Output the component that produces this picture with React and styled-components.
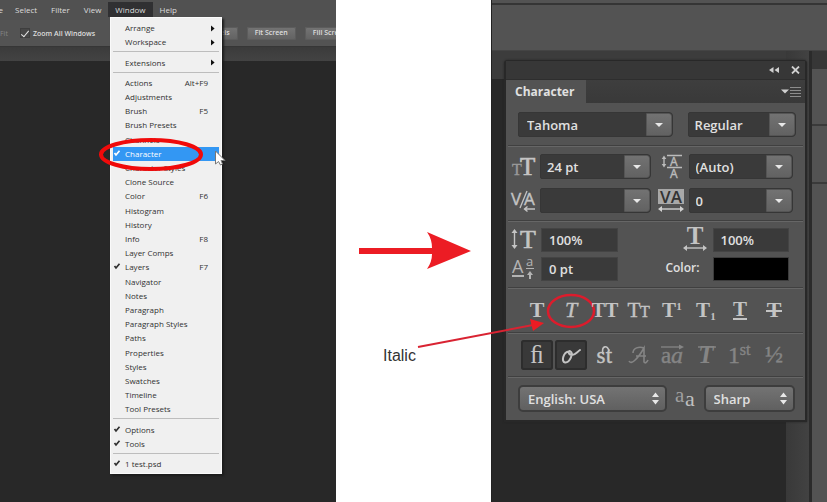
import React from "react";
import styled, { createGlobalStyle, css } from "styled-components";

const GlobalStyle = createGlobalStyle`
  *, *::before, *::after { box-sizing: border-box; }
  body { margin: 0; background: #fff; }
  button, input, select { font: inherit; color: inherit; margin: 0; padding: 0; border: 0; background: none; }
`;

const uiFont = `"Open Sans", "Noto Sans", sans-serif`;
const red = "#ec1c24";

const Page = styled.main`
  display: grid;
  grid-template-columns: 336fr 155fr 336fr;
  min-height: 100vh;
  overflow: hidden;
  font-family: ${uiFont};
`;

/* ---------- Left: application with the open menu ---------- */

const AppWindow = styled.section`
  position: relative;
  min-width: 0;
  background: #282828;
  overflow: hidden;
`;

const MenuBar = styled.nav`
  display: flex;
  height: 20px;
  padding-top: 2px;
  background: #515151;
  font-size: 8px;
  line-height: 15px;
  color: #dcdcdc;
`;

const MenuTitle = styled.button`
  flex: none;
  height: 15px;
  padding: 0 7px;
  line-height: 15px;
  background: ${(p) => (p.$open ? "#303032" : "transparent")};
`;

const ClippedTitle = styled(MenuTitle)`
  width: 8px;
  padding: 0;
  display: flex;
  justify-content: flex-end;
  overflow: hidden;
  padding-right: 5px;
`;

const OptionsBar = styled.div`
  display: flex;
  align-items: center;
  height: 26px;
  background: #535353;
  font-size: 7px;
  font-weight: 600;
  color: #dedede;
  white-space: nowrap;
`;

const FadedOption = styled.span`
  width: 20px;
  flex: none;
  color: #858585;
  font-weight: 400;
`;

const CheckOption = styled.label`
  display: flex;
  align-items: center;
  gap: 3px;
  flex: 1;
`;

const Tick = styled.input`
  appearance: none;
  width: 10px;
  height: 10px;
  background: #474747;
  border: 1px solid #3e3e3e;
  display: grid;
  place-items: center;
  &:checked::after {
    content: "";
    width: 4px;
    height: 8px;
    border: solid #e6e6e6;
    border-width: 0 1px 1px 0;
    transform: rotate(40deg);
  }
`;

const ViewButtons = styled.div`
  display: flex;
  flex: none;
  gap: 9px;
  width: 157px;
  overflow: hidden;
`;

const ViewButton = styled.button`
  flex: none;
  height: 13px;
  padding: 0 8px;
  border-radius: 2px;
  line-height: 12px;
  background: linear-gradient(#747474, #626262);
  box-shadow: inset 0 0 0 1px #5c5c5c;
`;

const DocTabs = styled.div`
  height: 15px;
  background: linear-gradient(#3b3b3b, #434343);
  border-top: 1px solid #363636;
`;

const Dropdown = styled.div`
  position: absolute;
  left: 110px;
  top: 17px;
  width: 112px;
  height: 457px;
  padding: 3px 2px 2px;
  display: flex;
  flex-direction: column;
  background: #f0f0f0;
  border: 1px solid #fafafa;
  box-shadow: 2px 2px 2px #1c1c1c;
  font-size: 8px;
  color: #303030;
`;

const Item = styled.button`
  flex: 1;
  min-height: 0;
  display: grid;
  grid-template-columns: 12px 1fr auto;
  align-items: center;
  padding-right: 11px;
  line-height: 14px;
  text-align: left;
  white-space: nowrap;
  ${(p) =>
    p.$active &&
    css`
      background: #3397f3;
      color: #fff;
    `}
  ${(p) =>
    p.$sub &&
    css`
      padding-right: 4px;
    `}
`;

const MenuRule = styled.hr`
  width: 100%;
  height: 1px;
  margin: 2px 0 3px;
  border: 0;
  background: #bdbdbd;
`;

const MenuRing = styled.svg`
  position: absolute;
  left: 98px;
  top: 136px;
`;

const Pointer = styled.svg`
  position: absolute;
  left: 214px;
  top: 150px;
`;

/* ---------- Middle: arrow and caption ---------- */

const Bridge = styled.section`
  position: relative;
  z-index: 2;
  padding-top: 231px;
`;

const BigArrow = styled.svg`
  display: block;
  margin-left: 23px;
`;

const Caption = styled.p`
  margin: 77px 0 0 47px;
  font: 16px/18px "Liberation Sans", Arial, sans-serif;
  color: #333;
`;

const CaptionLine = styled.svg`
  position: absolute;
  left: 81px;
  top: 316px;
`;

/* ---------- Right: workspace and Character panel ---------- */

const Workspace = styled.section`
  position: relative;
  min-width: 0;
  display: grid;
  grid-template-rows: 51px 1fr;
  background: #282828;
  border-left: 1px solid #222;
`;

const TopBar = styled.div`
  background: linear-gradient(#535353 3px, #353535 3px, #353535 5px, #535353 5px);
  border-bottom: 1px solid #444;
`;

const Docks = styled.div`
  display: grid;
  grid-template-columns: 1fr 26px 15px;
`;

const Canvas = styled.div`
  background: linear-gradient(#3c3c3c 28px, #282828 28px);
`;

const Scroller = styled.div`
  background: linear-gradient(90deg, #393939, #424242);
  border-right: 3px solid #2b2b2b;
`;

const Rail = styled.div`
  display: flex;
  flex-direction: column;
  background: #535353;
  border-top: 18px solid #373737;
`;

const RailCell = styled.div`
  height: ${(p) => p.$h}px;
  border-bottom: 2px solid #3a3a3a;
`;

const Panel = styled.section`
  position: absolute;
  left: 12px;
  right: 20px;
  top: 60px;
  border: 2px solid #282828;
  border-top-width: 1px;
  border-radius: 4px 4px 0 0;
  background: #535353;
  color: #e0e0e0;
  font-size: 13px;
  font-weight: 600;
  box-shadow: 0 0 2px #222;
`;

const PanelTop = styled.header`
  display: flex;
  justify-content: flex-end;
  align-items: center;
  gap: 11px;
  height: 18px;
  padding-right: 5px;
  background: #373737;
`;

const IconButton = styled.button`
  display: flex;
  color: #d0d0d0;
`;

const TabStrip = styled.div`
  display: flex;
  justify-content: space-between;
  align-items: center;
  height: 24px;
  padding-right: 4px;
  background: linear-gradient(#3e3e3e, #393939);
  border-top: 1px solid #2e2e2e;
`;

const Tab = styled.h2`
  align-self: stretch;
  margin: 0;
  padding: 0 12px 0 9px;
  font-size: 12px;
  line-height: 23px;
  font-weight: 700;
  background: #535353;
`;

const Rule = styled.hr`
  height: 2px;
  margin: 0 2px;
  border: 0;
  background: linear-gradient(#404040 1px, #666 1px);
`;

const FontRow = styled.div`
  display: grid;
  grid-template-columns: 154fr 108fr;
  column-gap: 15px;
  padding: 9px 9px 8px 12px;
`;

const MetricGrid = styled.div`
  display: grid;
  grid-template-columns: 28px 110fr 38px 104fr;
  row-gap: 9px;
  padding: 7px 12px 7px 6px;
`;

const ScaleGrid = styled.div`
  display: grid;
  grid-template-columns: 29px 76fr 95px 76fr;
  gap: 5px 0;
  padding: 6px 16px 6px 6px;
`;

const IconCell = styled.label`
  display: flex;
  align-items: center;
  justify-content: ${(p) => (p.$end ? "flex-end" : "flex-start")};
  padding-right: ${(p) => (p.$end ? 4 : 0)}px;
`;

const ColorLabel = styled.label`
  justify-self: end;
  padding-right: 13px;
  font-size: 12px;
  line-height: 22px;
`;

const Combo = styled.div`
  display: grid;
  grid-template-columns: 1fr 26px;
  height: 25px;
  background: #3a3a3a;
  border: 1px solid #363636;
  border-radius: 2px 4px 4px 2px;
  overflow: hidden;
`;

const ComboSelect = styled.select`
  appearance: none;
  min-width: 0;
  padding-left: ${(p) => (p.$wide ? 8 : 6)}px;
  outline: 0;
`;

const ComboArrow = styled.span`
  display: grid;
  place-items: center;
  background: linear-gradient(#727272, #626262);
  border: 1px solid #555;
  border-radius: 0 3px 3px 0;
`;

const Field = styled.input`
  min-width: 0;
  width: 100%;
  height: 24px;
  padding-left: 7px;
  background: #3a3a3a;
  border: 1px solid #444;
  outline: 0;
`;

const Swatch = styled.button`
  height: 24px;
  background: #000;
  border: 1px solid #3c3c3c;
`;

const StyleRow = styled.div`
  display: grid;
  grid-template-columns: repeat(8, 1fr);
  align-items: center;
  height: ${(p) => p.$h}px;
  padding: 0 14px 0 14px;
`;

const StyleButton = styled.button`
  position: relative;
  display: grid;
  place-items: center;
  height: 30px;
  margin: 0 1px;
  border-radius: 3px;
  color: ${(p) => (p.$dim ? "#858585" : "#c4c4c4")};
  ${(p) =>
    p.$on &&
    css`
      background: #393939;
      box-shadow: inset 0 0 0 2px #2d2d2d;
    `}
`;

const ItalicRing = styled.svg`
  position: absolute;
  left: 50%;
  top: 50%;
  transform: translate(-50%, -50%);
`;

const Footer = styled.div`
  display: grid;
  grid-template-columns: 148fr 37px 91fr;
  align-items: center;
  padding: 7px 10px 8px 12px;
`;

const Popup = styled.div`
  display: flex;
  align-items: center;
  height: 27px;
  padding-right: 5px;
  background: linear-gradient(#737373, #606060);
  border: 2px solid #3d3d3d;
  border-radius: 5px;
`;

const PopupSelect = styled.select`
  appearance: none;
  flex: 1;
  min-width: 0;
  padding-left: 8px;
  outline: 0;
`;

const AntiAlias = styled.span`
  display: grid;
  place-items: center;
`;

/* ---------- Drawings ---------- */

const serif = `"Liberation Serif", "Times New Roman", serif`;
const sans = `"Open Sans", sans-serif`;

const Glyph = ({ w = 30, h = 30, children, family = serif }) => (
  <svg
    width={w}
    height={h}
    viewBox={`0 0 ${w} ${h}`}
    fill="currentColor"
    fontFamily={family}
    fontWeight="400"
    overflow="visible"
    aria-hidden="true"
  >
    {children}
  </svg>
);

const Check = () => (
  <svg width="8" height="8" viewBox="0 0 8 8" aria-hidden="true">
    <path d="M1.5 4 L3 6 L6.5 1.8" fill="none" stroke="currentColor" strokeWidth="1.7" />
  </svg>
);

const SubArrow = () => (
  <svg width="5" height="7" viewBox="0 0 5 7" aria-hidden="true">
    <path d="M1 0.5 L4.6 3.5 L1 6.5Z" fill="#111" />
  </svg>
);

const DownArrow = () => (
  <svg width="10" height="6" viewBox="0 0 10 6" aria-hidden="true">
    <path d="M1 1 H9 L5 5Z" fill="#e8e8e8" />
  </svg>
);

const UpDown = () => (
  <svg width="9" height="13" viewBox="0 0 9 13" aria-hidden="true">
    <path d="M4.5 0.5 L8 5 H1Z M4.5 12.5 L8 8 H1Z" fill="#e8e8e8" />
  </svg>
);

const SizeIcon = () => (
  <Glyph w={24} h={24}>
    <text x="0" y="20" fontSize="16" fill="#999" stroke="#999" strokeWidth="0.4">T</text>
    <text x="8" y="20" fontSize="25" fill="#c4c4c4" stroke="#c4c4c4" strokeWidth="0.7">T</text>
  </Glyph>
);

const KernIcon = () => (
  <Glyph w={26} h={24} family={sans}>
    <g fill="#c4c4c4" stroke="#c4c4c4">
      <text x="-1" y="16" fontSize="17" strokeWidth="0.4">V</text>
      <path d="M8 19 L15 2" strokeWidth="1.3" />
      <text x="12" y="16" fontSize="17" strokeWidth="0.4">A</text>
      <path d="M12 20 H23 M15.5 17.5 L12.5 20 L15.5 22.5" fill="none" strokeWidth="1.4" />
    </g>
  </Glyph>
);

const LeadingIcon = () => (
  <Glyph w={24} h={25} family={sans}>
    <g fill="#bbb" stroke="#bbb">
      <path d="M6 1.5 H21 M6 13.5 H21" strokeWidth="1.4" />
      <text x="9" y="11.5" fontSize="12" strokeWidth="0.4">A</text>
      <text x="9" y="24" fontSize="12" strokeWidth="0.4">A</text>
      <path d="M3 4 V11" strokeWidth="1.4" />
      <path d="M3 1.5 L5.3 5 H0.7Z M3 13.5 L5.3 10 H0.7Z" stroke="none" />
    </g>
  </Glyph>
);

const TrackIcon = () => (
  <Glyph w={27} h={25} family={sans}>
    <rect x="0" y="1" width="26" height="15" fill="#a8a8a8" />
    <text x="13" y="15" fontSize="17" fontWeight="600" fill="#333" textAnchor="middle">VA</text>
    <path d="M2 21 H24" stroke="#d0d0d0" strokeWidth="1.4" />
    <path d="M0 21 L4 18 V24Z M26 21 L22 18 V24Z" fill="#d0d0d0" />
  </Glyph>
);

const VScaleIcon = () => (
  <Glyph w={24} h={24}>
    <g fill="#c4c4c4">
      <path d="M2.5 3 V19" stroke="#c4c4c4" strokeWidth="1.4" />
      <path d="M2.5 1 L5.5 5 H-0.5Z M2.5 21 L5.5 17 H-0.5Z" />
      <text x="8" y="20" fontSize="26" stroke="#c4c4c4" strokeWidth="0.6">T</text>
    </g>
  </Glyph>
);

const HScaleIcon = () => (
  <Glyph w={26} h={24}>
    <g fill="#c4c4c4">
      <text x="12" y="16" fontSize="25" fontWeight="700" textAnchor="middle">T</text>
      <path d="M3 20 H22" stroke="#c4c4c4" strokeWidth="1.4" />
      <path d="M0 20 L4 17 V23Z M24 20 L20 17 V23Z" />
    </g>
  </Glyph>
);

const BaselineIcon = () => (
  <Glyph w={24} h={24} family={sans}>
    <g fill="#b4b4b4">
      <text x="0" y="16" fontSize="18">A</text>
      <rect x="0" y="18" width="12" height="2" />
      <text x="14" y="9" fontSize="13">a</text>
      <rect x="14" y="11" width="8" height="1" />
      <path d="M18 22 V18" stroke="#b4b4b4" strokeWidth="2" />
      <path d="M18 14 L21 18 H15Z" />
    </g>
  </Glyph>
);

const T = (props) => (
  <text x="15" y="21" fontSize="20" fontWeight="700" textAnchor="middle" {...props}>
    {props.children || "T"}
  </text>
);

const thin = { fontWeight: "400", stroke: "currentColor", strokeWidth: "0.4" };

const typeStyles = [
  { label: "Faux Bold", art: <T fontSize="22" /> },
  { label: "Faux Italic", art: <T {...thin} fontStyle="italic" fontSize="22" /> },
  { label: "All Caps", art: <T fontSize="20">TT</T> },
  {
    label: "Small Caps",
    art: (
      <>
        <T {...thin} x="10" fontSize="21" />
        <T {...thin} x="21" fontSize="16" />
      </>
    ),
  },
  { label: "Superscript", art: <><T x="12" fontSize="21" /><T x="22" y="14" fontSize="11">1</T></> },
  { label: "Subscript", art: <><T x="12" fontSize="21" /><T x="22" y="24" fontSize="11">1</T></> },
  { label: "Underline", art: <><T y="20" fontSize="21" /><rect x="8" y="22" width="14" height="2" /></> },
  { label: "Strikethrough", art: <><T fontSize="22" /><rect x="7" y="14" width="16" height="2" /></> },
];

const openType = [
  { label: "Standard Ligatures", on: true, art: <T fontSize="25" y="23" fontWeight="400">ﬁ</T> },
  {
    label: "Contextual Alternates",
    on: true,
    art: (
      <path
        d="M13 11.5 C7 12 5 22 9 22.5 C14 23 18 13 14 11.2 C12 10.5 12 15 16 15 C19 15 21 12 24 10"
        fill="none"
        stroke="currentColor"
        strokeWidth="2"
        strokeLinecap="round"
      />
    ),
  },
  {
    label: "Discretionary Ligatures",
    art: (
      <>
        <T {...thin} x="11" y="23" fontSize="23">s</T>
        <T {...thin} x="19" y="23" fontSize="23">t</T>
        <path d="M13 14 C11 5 18 5 19 11" fill="none" stroke="currentColor" strokeWidth="1.6" />
      </>
    ),
  },
  {
    label: "Swash",
    dim: true,
    art: (
      <path
        d="M5 21 C7 25 13 20 20 8 L20 22 C21 24 23 22 24 20 M12 16 H22 M20 8 C15 6 9 8 9 13"
        fill="none"
        stroke="currentColor"
        strokeWidth="1.6"
      />
    ),
  },
  {
    label: "Stylistic Alternates",
    dim: true,
    art: (
      <>
        <T {...thin} x="9" y="23" fontSize="23">a</T>
        <T {...thin} x="20" y="23" fontSize="24" fontStyle="italic">a</T>
        <path d="M4 7 H24" stroke="currentColor" strokeWidth="1.3" />
        <path d="M27 7 L22 4.5 V9.5Z" />
      </>
    ),
  },
  {
    label: "Titling Alternates",
    dim: true,
    art: (
      <>
        <T y="23" fontSize="25" fontStyle="italic" />
        <path d="M7 7 H25" stroke="currentColor" strokeWidth="1.4" />
      </>
    ),
  },
  {
    label: "Ordinals",
    dim: true,
    art: (
      <>
        <T {...thin} x="9" y="23" fontSize="24">1</T>
        <T {...thin} x="20" y="15" fontSize="16">st</T>
      </>
    ),
  },
  { label: "Fractions", dim: true, art: <T {...thin} y="22" fontSize="24">½</T> },
];

/* ---------- Data ---------- */

const menuGroups = [
  [{ name: "Arrange", sub: true }, { name: "Workspace", sub: true }],
  [{ name: "Extensions", sub: true }],
  [
    { name: "Actions", key: "Alt+F9" },
    { name: "Adjustments" },
    { name: "Brush", key: "F5" },
    { name: "Brush Presets" },
    { name: "Channels" },
    { name: "Character", checked: true, active: true },
    { name: "Character Styles" },
    { name: "Clone Source" },
    { name: "Color", key: "F6" },
    { name: "Histogram" },
    { name: "History" },
    { name: "Info", key: "F8" },
    { name: "Layer Comps" },
    { name: "Layers", key: "F7", checked: true },
    { name: "Navigator" },
    { name: "Notes" },
    { name: "Paragraph" },
    { name: "Paragraph Styles" },
    { name: "Paths" },
    { name: "Properties" },
    { name: "Styles" },
    { name: "Swatches" },
    { name: "Timeline" },
    { name: "Tool Presets" },
  ],
  [{ name: "Options", checked: true }, { name: "Tools", checked: true }],
  [{ name: "1 test.psd", checked: true }],
];

const ComboBox = ({ id, label, value, wide }) => (
  <Combo>
    <ComboSelect id={id} aria-label={label} $wide={wide} defaultValue={value}>
      <option>{value}</option>
    </ComboSelect>
    <ComboArrow><DownArrow /></ComboArrow>
  </Combo>
);

const PopupBox = ({ label, value }) => (
  <Popup>
    <PopupSelect aria-label={label} defaultValue={value}>
      <option>{value}</option>
    </PopupSelect>
    <UpDown />
  </Popup>
);

function WindowMenu() {
  return (
    <Dropdown role="menu" aria-label="Window">
      {menuGroups.map((group, g) => (
        <React.Fragment key={g}>
          {g > 0 && <MenuRule />}
          {group.map((item) => (
            <Item key={item.name} role="menuitem" $active={item.active} $sub={item.sub}>
              <span>{item.checked && <Check />}</span>
              <span>{item.name}</span>
              {item.sub ? <SubArrow /> : <span>{item.key}</span>}
            </Item>
          ))}
        </React.Fragment>
      ))}
    </Dropdown>
  );
}

function CharacterPanel() {
  return (
    <Panel aria-label="Character panel">
      <PanelTop>
        <IconButton aria-label="Collapse">
          <svg width="12" height="8" viewBox="0 0 12 8">
            <path d="M5.5 1 V7 L1 4Z M11 1 V7 L6.5 4Z" fill="currentColor" />
          </svg>
        </IconButton>
        <IconButton aria-label="Close">
          <svg width="9" height="8" viewBox="0 0 9 8">
            <path d="M1 0.5 L8 7.5 M8 0.5 L1 7.5" stroke="currentColor" strokeWidth="1.8" />
          </svg>
        </IconButton>
      </PanelTop>
      <TabStrip>
        <Tab>Character</Tab>
        <IconButton aria-label="Panel options">
          <svg width="20" height="12" viewBox="0 0 20 12">
            <path d="M0 3.5 H8 L4 7.5Z" fill="#d0d0d0" />
            <path d="M9 1.5 H20 M9 4.5 H20 M9 7.5 H20 M9 10.5 H20" stroke="#8d8d8d" />
          </svg>
        </IconButton>
      </TabStrip>

      <FontRow>
        <ComboBox label="Font family" value="Tahoma" wide />
        <ComboBox label="Font style" value="Regular" />
      </FontRow>
      <Rule />
      <MetricGrid>
        <IconCell htmlFor="size"><SizeIcon /></IconCell>
        <ComboBox id="size" label="Font size" value="24 pt" />
        <IconCell htmlFor="leading" $end><LeadingIcon /></IconCell>
        <ComboBox id="leading" label="Leading" value="(Auto)" />
        <IconCell htmlFor="kerning"><KernIcon /></IconCell>
        <ComboBox id="kerning" label="Kerning" value="" />
        <IconCell htmlFor="tracking" $end><TrackIcon /></IconCell>
        <ComboBox id="tracking" label="Tracking" value="0" />
      </MetricGrid>
      <Rule />
      <ScaleGrid>
        <IconCell htmlFor="vscale"><VScaleIcon /></IconCell>
        <Field id="vscale" aria-label="Vertical scale" defaultValue="100%" />
        <IconCell htmlFor="hscale" $end><HScaleIcon /></IconCell>
        <Field id="hscale" aria-label="Horizontal scale" defaultValue="100%" />
        <IconCell htmlFor="baseline"><BaselineIcon /></IconCell>
        <Field id="baseline" aria-label="Baseline shift" defaultValue="0 pt" />
        <ColorLabel htmlFor="color">Color:</ColorLabel>
        <Swatch id="color" aria-label="Color: black" />
      </ScaleGrid>
      <Rule />
      <StyleRow $h={43}>
        {typeStyles.map((s) => (
          <StyleButton key={s.label} aria-label={s.label}>
            <Glyph>{s.art}</Glyph>
            {s.label === "Faux Italic" && (
              <ItalicRing width="50" height="38" viewBox="0 0 50 38" aria-hidden="true">
                <ellipse cx="25" cy="19" rx="23" ry="16" fill="none" stroke="#dc1c2c" strokeWidth="2.5" />
              </ItalicRing>
            )}
          </StyleButton>
        ))}
      </StyleRow>
      <Rule />
      <StyleRow $h={42}>
        {openType.map((s) => (
          <StyleButton key={s.label} aria-label={s.label} $on={s.on} $dim={s.dim}>
            <Glyph>{s.art}</Glyph>
          </StyleButton>
        ))}
      </StyleRow>
      <Rule />
      <Footer>
        <PopupBox label="Language" value="English: USA" />
        <AntiAlias>
          <Glyph w={22} h={20}>
            <text x="1" y="13" fontSize="21" fill="#a0a0a0">a</text>
            <text x="11" y="17" fontSize="22" fill="#c0c0c0">a</text>
          </Glyph>
        </AntiAlias>
        <PopupBox label="Anti-aliasing" value="Sharp" />
      </Footer>
    </Panel>
  );
}

export default function App() {
  return (
    <>
      <GlobalStyle />
      <Page>
        <AppWindow>
          <MenuBar>
            <ClippedTitle>Image</ClippedTitle>
            <MenuTitle>Select</MenuTitle>
            <MenuTitle>Filter</MenuTitle>
            <MenuTitle>View</MenuTitle>
            <MenuTitle $open>Window</MenuTitle>
            <MenuTitle>Help</MenuTitle>
          </MenuBar>
          <OptionsBar>
            <FadedOption>Fit</FadedOption>
            <CheckOption>
              <Tick type="checkbox" defaultChecked />
              Zoom All Windows
            </CheckOption>
            <ViewButtons>
              <ViewButton>Actual Pixels</ViewButton>
              <ViewButton>Fit Screen</ViewButton>
              <ViewButton>Fill Screen</ViewButton>
            </ViewButtons>
          </OptionsBar>
          <DocTabs />
          <WindowMenu />
          <MenuRing width="108" height="37" viewBox="0 0 108 37" aria-hidden="true">
            <ellipse cx="53" cy="18.5" rx="50" ry="14.5" fill="none" stroke="#f00a0a" strokeWidth="4" />
          </MenuRing>
          <Pointer width="12" height="16" viewBox="0 0 12 16" aria-hidden="true">
            <path d="M1.5 1 V14 L4.5 11.5 L6.5 15 L8.5 14 L7 10.5 H11Z" fill="#fff" stroke="#777" />
          </Pointer>
        </AppWindow>

        <Bridge>
          <BigArrow width="112" height="39" viewBox="0 0 112 39" aria-hidden="true">
            <path d="M0 17 H73 Q73 8 68 1 L112 20 L68 38 Q73 31 73 23 H0Z" fill={red} />
          </BigArrow>
          <Caption>Italic</Caption>
          <CaptionLine width="130" height="36" viewBox="0 0 130 36" aria-hidden="true">
            <path d="M1 31 L116 9" stroke="#d92332" strokeWidth="2" />
            <path d="M127 7 L113 3 L116 15Z" fill={red} />
          </CaptionLine>
        </Bridge>

        <Workspace>
          <TopBar />
          <Docks>
            <Canvas />
            <Scroller />
            <Rail>
              <RailCell $h={57} />
              <RailCell $h={58} />
            </Rail>
          </Docks>
          <CharacterPanel />
        </Workspace>
      </Page>
    </>
  );
}
